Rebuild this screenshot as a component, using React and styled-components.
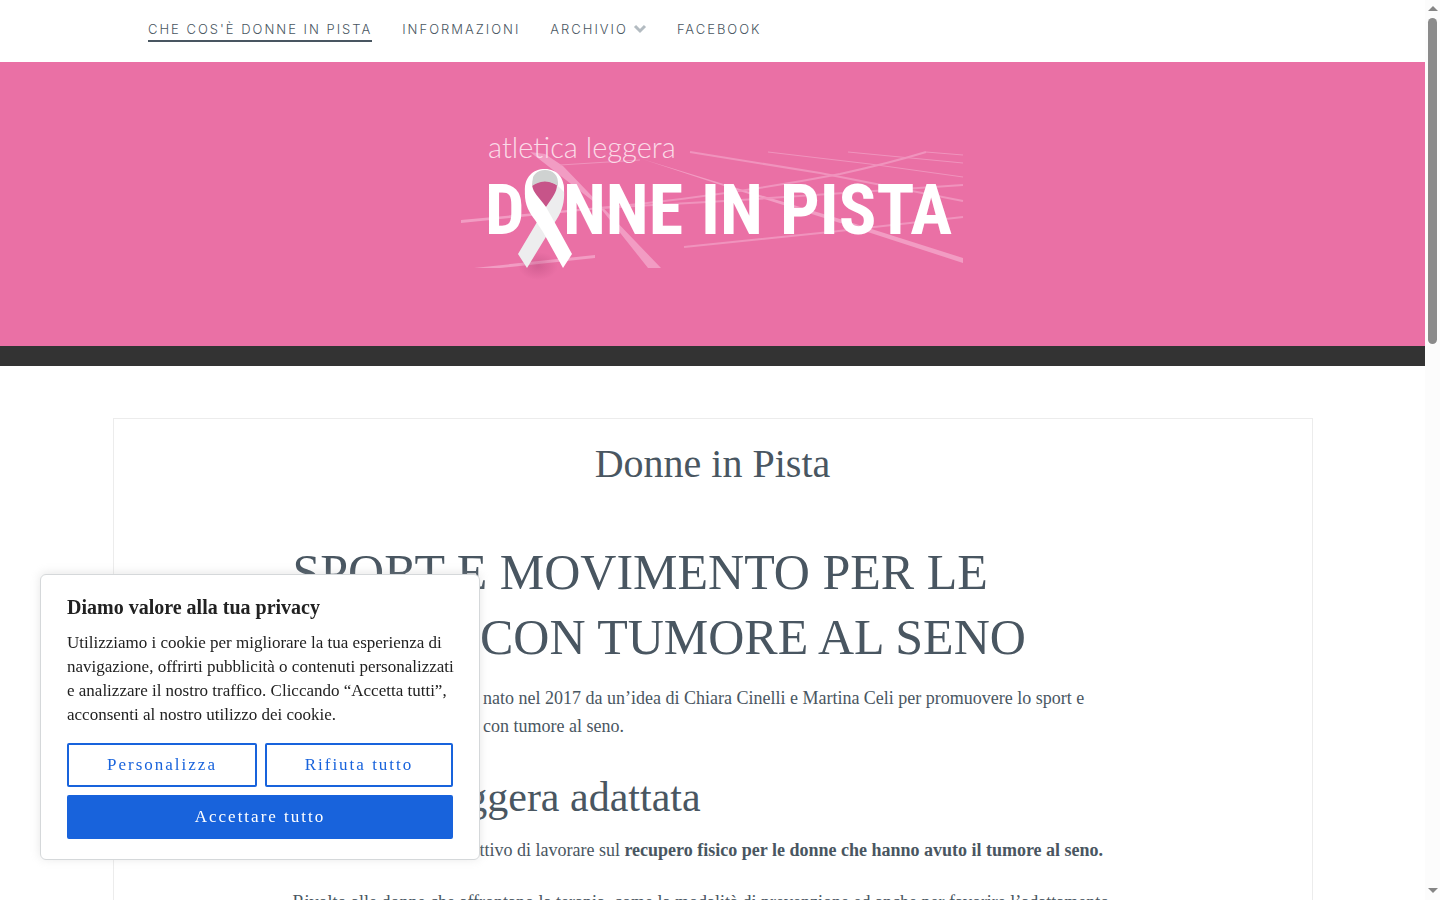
import React from "react";
import styled, { createGlobalStyle } from "styled-components";

const serif = '"Liberation Serif", "Times New Roman", serif';
const slate = "#495661";

const GlobalStyle = createGlobalStyle`
  *, *::before, *::after { box-sizing: border-box; }
  body { margin: 0; background: #fff; color: ${slate}; font: 400 18px/28px ${serif}; }
  h1, h2, h3, p, ul { margin: 0; padding: 0; }
`;

const Viewport = styled.div`
  display: grid;
  grid-template-columns: minmax(0, 1fr) 15px;
  height: 100vh;
  overflow: hidden;
`;

const Page = styled.div`
  min-width: 0;
  overflow: hidden;
`;

const Rail = styled.div`
  display: flex;
  flex-direction: column;
  align-items: center;
  justify-content: space-between;
  padding: 6px 0;
  background: #fcfcfc;
`;

const Thumb = styled.div`
  flex: 0 0 38%;
  width: 9px;
  margin: 6px 0 auto;
  border-radius: 5px;
  background: #8b8b8b;
  max-height: 326px;
`;

const Arrow = styled.svg`
  display: block;
  width: 10px;
  height: 6px;
  fill: #858585;
`;

const Nav = styled.nav`
  height: 62px;
  padding: 20px 148px;
`;

const Menu = styled.ul`
  display: flex;
  gap: 30px;
  list-style: none;
`;

const MenuLink = styled.a`
  display: flex;
  align-items: center;
  gap: 5px;
  height: 22px;
  padding-bottom: 2px;
  border-bottom: 2px solid ${(p) => (p.$active ? slate : "transparent")};
  color: ${slate};
  font: 300 13px/18px Inter, "Open Sans", sans-serif;
  letter-spacing: 2px;
  text-decoration: none;
  text-transform: uppercase;
  white-space: nowrap;
`;

const Chevron = styled.svg`
  width: 14px;
  height: 10px;
  fill: none;
  stroke: #b3bbc1;
  stroke-width: 3;
`;

const Banner = styled.header`
  display: flex;
  justify-content: center;
  padding: 60px 0 64px;
  background: #ea70a5;
  border-bottom: 20px solid #333;
`;

const Logo = styled.svg`
  display: block;
  width: 505px;
  height: 160px;
`;

const Sheet = styled.main`
  max-width: 1200px;
  margin: 52px auto 0;
  padding: 20px 24px;
  border: 1px solid #ececec;
`;

const Title = styled.h1`
  font: 400 40px/50px ${serif};
  text-align: center;
`;

const Article = styled.article`
  max-width: 840px;
  margin: 51px auto 0;
`;

const Headline = styled.h2`
  margin-bottom: 14px;
  font: 400 50px/65px ${serif};
`;

const Subhead = styled.h3`
  margin: 32px 0 14px;
  font: 400 42px/50px ${serif};
`;

const Paragraph = styled.p`
  margin-bottom: 24px;
  white-space: nowrap;
`;

const Consent = styled.section`
  position: fixed;
  left: 40px;
  bottom: 40px;
  width: 440px;
  padding: 20px 26px;
  border: 1px solid #d5d8da;
  border-radius: 6px;
  background: #fff;
  box-shadow: 0 -1px 10px rgba(172, 171, 171, 0.3);
  color: #212121;
`;

const ConsentTitle = styled.h2`
  margin-bottom: 12px;
  font: 700 20px/24px ${serif};
`;

const ConsentText = styled.p`
  margin: 0 -4px 16px 0;
  font: 400 17px/24px ${serif};
`;

const Actions = styled.div`
  display: grid;
  grid-template-columns: 190px 1fr;
  gap: 8px;
`;

const Button = styled.button`
  grid-column: ${(p) => (p.$primary ? "1 / -1" : "auto")};
  height: 44px;
  border: 2px solid #1863dc;
  border-radius: 2px;
  background: ${(p) => (p.$primary ? "#1863dc" : "#fff")};
  color: ${(p) => (p.$primary ? "#fff" : "#1863dc")};
  font: 400 17px/20px ${serif};
  letter-spacing: 2px;
`;

const links = [
  { label: "Che cos'è Donne in Pista", active: true },
  { label: "Informazioni" },
  { label: "Archivio", submenu: true },
  { label: "Facebook" },
];

function BannerLogo() {
  return (
    <Logo viewBox="460 122 505 160" role="img" aria-label="Atletica leggera Donne in Pista">
      <defs>
        <radialGradient id="shade">
          <stop offset="0" stopColor="#a83f70" stopOpacity=".35" />
          <stop offset="1" stopColor="#a83f70" stopOpacity="0" />
        </radialGradient>
      </defs>
      <g fill="#f29cc3">
        <path d="M530 152L545 154L563 166L661 268H648L598 205Z" />
        <path d="M461 220L600 207V209L461 223Z" />
        <path d="M474 268L595 255V258L500 268Z" />
        <path d="M642 159L730 186L840 219L963 258V263L840 223L730 188Z" />
      </g>
      <g fill="none" stroke="#f093bd" strokeWidth="2">
        <path d="M600 208Q725 196 840 174Q890 163 926 152" />
        <path d="M600 208L725 201L963 185" />
        <path d="M684 247L830 232L963 217" />
        <path d="M560 165L640 160" strokeWidth="1" />
        <path d="M690 152L820 173L963 201" />
        <path d="M768 152L870 164L963 177" strokeWidth="1" />
        <path d="M848 152L963 163" strokeWidth="1" />
        <path d="M926 152L963 155" strokeWidth="1" />
      </g>
      <ellipse cx="538" cy="266" rx="20" ry="14" fill="url(#shade)" />
      <text x="488" y="158" fill="#fbdbe8" fontFamily="Lato, sans-serif" fontWeight="300" fontSize="29">
        atletica leggera
      </text>
      <g fill="#fff" fontFamily='"Roboto Condensed", "Liberation Sans Narrow", sans-serif' fontWeight="700" fontSize="70">
        <text x="485" y="234">D</text>
        <text x="563" y="234">NNE</text>
        <text x="701" y="234">IN</text>
        <text x="780" y="234">PISTA</text>
      </g>
      <path fill="#c75489" d="M532 186Q545 176 558 186Q557 195 546 207Q534 196 532 186Z" />
      <path
        fill="#ededee"
        d="M564 190C565 204 561 213 555 222L527 268L518 254L546 207C552 198 557 192 557 185L555 174C561 178 564 183 564 190Z"
      />
      <path fill="#fff" d="M525 192C524 177 533 169 545 169C557 169 565 178 564 192L557 185Q545 177 532 185Z" />
      <path fill="#cfd2d1" d="M532 186C531 175 537 170 545 170C553 170 559 175 558 186Q545 177 532 186Z" />
      <path
        fill="#fff"
        d="M525 190C524 204 529 212 535 220L543 232L563 268L572 254L555 223L546 207C539 197 533 193 532 185L533 175C528 179 525 184 525 190Z"
      />
    </Logo>
  );
}

export default function App() {
  return (
    <>
      <GlobalStyle />
      <Viewport>
        <Page>
          <Nav aria-label="Menu principale">
            <Menu>
              {links.map((l) => (
                <li key={l.label}>
                  <MenuLink href="#" $active={l.active}>
                    {l.label}
                    {l.submenu && (
                      <Chevron viewBox="0 0 14 10" aria-hidden="true">
                        <path d="M2 2L7 7L12 2" />
                      </Chevron>
                    )}
                  </MenuLink>
                </li>
              ))}
            </Menu>
          </Nav>
          <Banner>
            <BannerLogo />
          </Banner>
          <Sheet>
            <Title>Donne in Pista</Title>
            <Article>
              <Headline>SPORT E MOVIMENTO PER LE DONNE CON TUMORE AL SENO</Headline>
              <Paragraph>
                Il progetto Donne in Pista nato nel 2017 da un’idea di Chiara Cinelli e Martina Celi per promuovere lo sport e
                <br />
                il movimento tra le donne con tumore al seno.
              </Paragraph>
              <Subhead>Atletica leggera adattata</Subhead>
              <Paragraph>
                Un progetto ha come obiettivo di lavorare sul{" "}
                <strong>recupero fisico per le donne che hanno avuto il tumore al seno.</strong>
              </Paragraph>
              <Paragraph>
                Rivolto alle donne che affrontano la terapia, come la modalità di prevenzione ed anche per favorire
                l’adattamento
              </Paragraph>
            </Article>
          </Sheet>
        </Page>
        <Rail aria-hidden="true">
          <Arrow viewBox="0 0 10 6">
            <path d="M5 0L10 5H0Z" />
          </Arrow>
          <Thumb />
          <Arrow viewBox="0 0 10 6">
            <path d="M0 0H10L5 5Z" />
          </Arrow>
        </Rail>
      </Viewport>
      <Consent aria-labelledby="consent-title">
        <ConsentTitle id="consent-title">Diamo valore alla tua privacy</ConsentTitle>
        <ConsentText>
          Utilizziamo i cookie per migliorare la tua esperienza di navigazione, offrirti pubblicità o contenuti
          personalizzati e analizzare il nostro traffico. Cliccando “Accetta tutti”, acconsenti al nostro utilizzo dei
          cookie.
        </ConsentText>
        <Actions>
          <Button type="button">Personalizza</Button>
          <Button type="button">Rifiuta tutto</Button>
          <Button type="button" $primary>
            Accettare tutto
          </Button>
        </Actions>
      </Consent>
    </>
  );
}
